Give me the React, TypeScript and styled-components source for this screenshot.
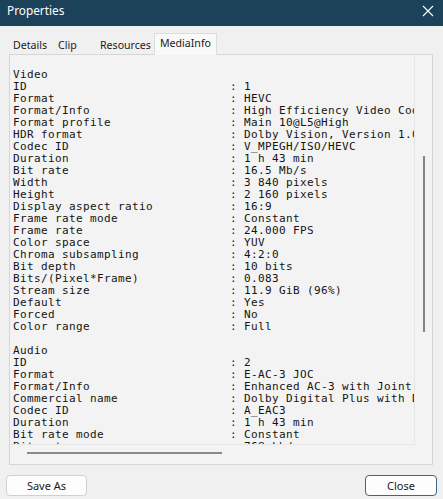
import React from "react";
import styled, { createGlobalStyle } from "styled-components";

const GlobalStyle = createGlobalStyle`
  html, body {
    margin: 0;
    padding: 0;
    background: #f0f0f0;
  }
`;

type Row = [string, string?];

const rows: Row[] = [
  [""],
  ["Video"],
  ["ID", "1"],
  ["Format", "HEVC"],
  ["Format/Info", "High Efficiency Video Codec"],
  ["Format profile", "Main 10@L5@High"],
  ["HDR format", "Dolby Vision, Version 1.0, dvhe.08.06, BL+RPU"],
  ["Codec ID", "V_MPEGH/ISO/HEVC"],
  ["Duration", "1 h 43 min"],
  ["Bit rate", "16.5 Mb/s"],
  ["Width", "3 840 pixels"],
  ["Height", "2 160 pixels"],
  ["Display aspect ratio", "16:9"],
  ["Frame rate mode", "Constant"],
  ["Frame rate", "24.000 FPS"],
  ["Color space", "YUV"],
  ["Chroma subsampling", "4:2:0"],
  ["Bit depth", "10 bits"],
  ["Bits/(Pixel*Frame)", "0.083"],
  ["Stream size", "11.9 GiB (96%)"],
  ["Default", "Yes"],
  ["Forced", "No"],
  ["Color range", "Full"],
  [""],
  ["Audio"],
  ["ID", "2"],
  ["Format", "E-AC-3 JOC"],
  ["Format/Info", "Enhanced AC-3 with Joint Object Coding"],
  ["Commercial name", "Dolby Digital Plus with Dolby Atmos"],
  ["Codec ID", "A_EAC3"],
  ["Duration", "1 h 43 min"],
  ["Bit rate mode", "Constant"],
  ["Bit rate", "768 kb/s"],
];

const tabs: { name: string; width: number }[] = [
  { name: "Details", width: 45 },
  { name: "Clip", width: 42 },
  { name: "Resources", width: 61 },
  { name: "MediaInfo", width: 63 },
];

const App: React.FC = () => {
  return (
    <Window>
      <GlobalStyle />
      <TitleBar>
        <Title>Properties</Title>
        <CloseIcon width="12" height="12" viewBox="0 0 12 12">
          <path d="M1 1L11 11M11 1L1 11" stroke="#ffffff" strokeWidth="1.1" />
        </CloseIcon>
      </TitleBar>

      <TabBar>
        {tabs.map((t) => (
          <Tab key={t.name} $selected={t.name === "MediaInfo"} $width={t.width}>
            {t.name}
          </Tab>
        ))}
      </TabBar>

      <Panel>
        <InfoView>
          <TextArea>
            {rows.map(([label, value], i) => (
              <Line key={i}>
                <Label>{label}</Label>
                {value !== undefined && <Value>: {value}</Value>}
              </Line>
            ))}
          </TextArea>
          <VTrack>
            <VThumb />
          </VTrack>
          <HTrack>
            <HThumb />
          </HTrack>
        </InfoView>
      </Panel>

      <Footer>
        <Button>Save As</Button>
        <Button $default>Close</Button>
      </Footer>
    </Window>
  );
};

export default App;

const Window = styled.div`
  width: 443px;
  height: 499px;
  display: flex;
  flex-direction: column;
  background: #f0f0f0;
  font-family: "Noto Sans", "Open Sans", sans-serif;
  overflow: hidden;
`;

const TitleBar = styled.div`
  height: 26px;
  background: #1b4258;
  display: flex;
  align-items: center;
  justify-content: space-between;
  padding: 0 8px 0 7px;
  flex-shrink: 0;
`;

const Title = styled.span`
  color: #ffffff;
  font-size: 11.8px;
  line-height: 1;
  margin-top: -4px;
`;

const CloseIcon = styled.svg`
  margin-top: -4px;
  margin-right: 1px;
`;

const TabBar = styled.div`
  display: flex;
  align-items: flex-end;
  height: 28px;
  padding-left: 6px;
  flex-shrink: 0;
`;

const Tab = styled.div<{ $selected?: boolean; $width: number }>`
  width: ${({ $width }) => $width}px;
  height: ${({ $selected }) => ($selected ? 22 : 19)}px;
  box-sizing: border-box;
  padding-left: ${({ $selected }) => ($selected ? 5 : 6)}px;
  display: flex;
  align-items: center;
  font-size: 10.6px;
  color: #1a1a1a;
  white-space: nowrap;
  background: ${({ $selected }) => ($selected ? "#f9f9f9" : "transparent")};
  border: 1px solid ${({ $selected }) => ($selected ? "#dcdcdc" : "transparent")};
  border-bottom: none;
  margin-bottom: ${({ $selected }) => ($selected ? -1 : 0)}px;
  position: relative;
  z-index: ${({ $selected }) => ($selected ? 1 : 0)};
  padding-bottom: ${({ $selected }) => ($selected ? 3 : 0)}px;
`;

const Panel = styled.div`
  margin: 0 10px 0 9px;
  height: 411px;
  box-sizing: border-box;
  border: 1px solid #d6d6d6;
  background: #f3f3f3;
  flex-shrink: 0;
`;

const InfoView = styled.div`
  display: grid;
  grid-template-columns: 405px 17px;
  grid-template-rows: 390px 19px;
  height: 100%;
`;

const TextArea = styled.div`
  overflow: hidden;
  border-right: 1px solid #e6e6e6;
  border-bottom: 1px solid #e6e6e6;
  font-family: "DejaVu Sans Mono", "Liberation Mono", monospace;
  font-size: 11px;
  letter-spacing: 0.38px;
  color: #141414;
  padding: 2px 0 0 3px;
`;

const Line = styled.div`
  height: 12px;
  line-height: 12px;
  white-space: pre;
  display: flex;
`;

const Label = styled.span`
  display: inline-block;
  width: 217px;
  flex-shrink: 0;
`;

const Value = styled.span`
  white-space: pre;
`;

const VTrack = styled.div`
  display: flex;
  justify-content: center;
  padding-top: 101px;
  padding-left: 1px;
`;

const VThumb = styled.div`
  width: 2px;
  height: 176px;
  background: #858585;
`;

const HTrack = styled.div`
  padding: 7px 0 0 17px;
`;

const HThumb = styled.div`
  width: 195px;
  height: 2px;
  background: #8a8a8a;
`;

const Footer = styled.div`
  display: flex;
  justify-content: space-between;
  padding: 10px 6px 0 6px;
`;

const Button = styled.button<{ $default?: boolean }>`
  width: ${({ $default }) => ($default ? 72 : 81)}px;
  height: 21px;
  box-sizing: border-box;
  border-radius: 4px;
  background: #fdfdfd;
  border: 1px solid ${({ $default }) => ($default ? "#3f6781" : "#d0d0d0")};
  font-family: "Noto Sans", "Open Sans", sans-serif;
  font-size: 11px;
  color: #1a1a1a;
  padding: 0;
  line-height: 1;
`;
